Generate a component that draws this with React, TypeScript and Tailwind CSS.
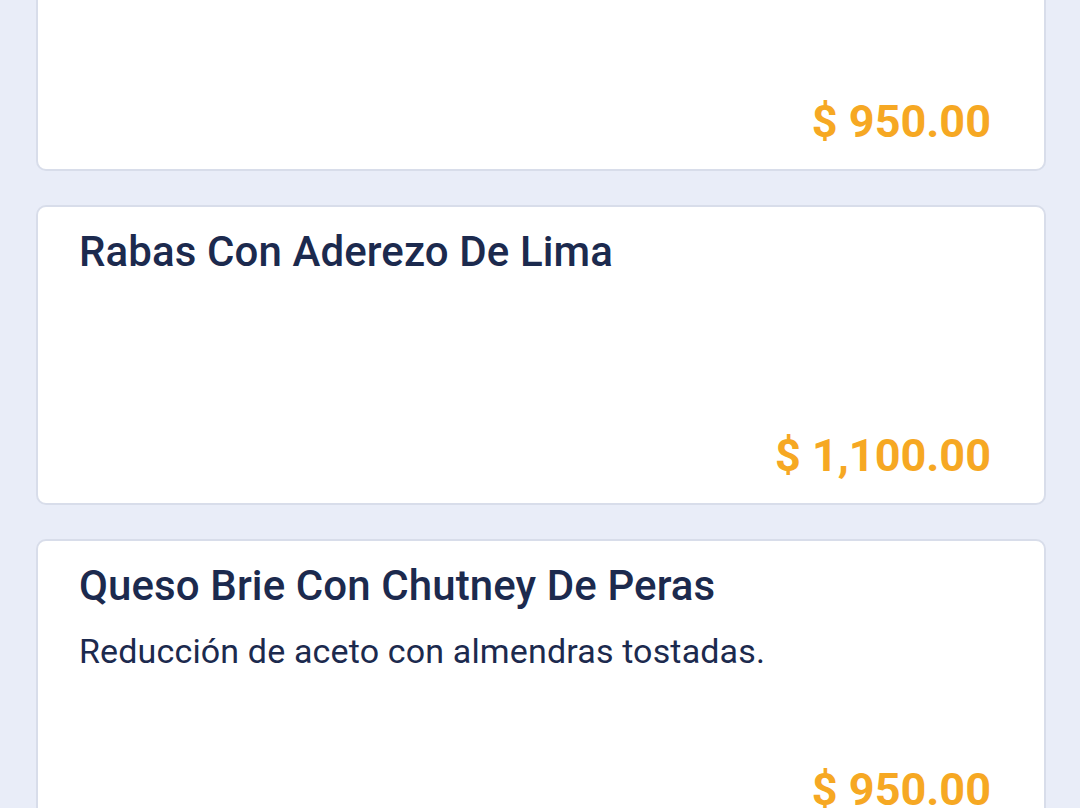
import React from "react";

type Item = { title?: string; desc?: string; price: string };

const items: Item[] = [
  { price: "$ 950.00" },
  { title: "Rabas Con Aderezo De Lima", price: "$ 1,100.00" },
  {
    title: "Queso Brie Con Chutney De Peras",
    desc: "Reducción de aceto con almendras tostadas.",
    price: "$ 950.00",
  },
];

function Card({ item }: { item: Item }) {
  return (
    <div className="h-[300px] shrink-0 rounded-[10px] border-2 border-[#d8ddea] bg-white flex flex-col pl-[41px] pr-[53px] pt-[21px] pb-[22px]">
      {item.title && (
        <h2 className="text-[42px] leading-[48px] font-medium text-[#1c2a4e] tracking-[0.1px] whitespace-nowrap">
          {item.title}
        </h2>
      )}
      {item.desc && (
        <p className="mt-[21px] text-[34px] leading-[40px] text-[#1c2a4e] tracking-[0.15px] whitespace-nowrap">
          {item.desc}
        </p>
      )}
      <div className="mt-auto text-right text-[45px] leading-[50px] font-bold text-[#f6a823] whitespace-nowrap">
        {item.price}
      </div>
    </div>
  );
}

export default function App() {
  return (
    <div
      className="w-[1080px] h-[808px] overflow-hidden bg-[#e9edf8]"
      style={{ fontFamily: "Roboto, 'Noto Sans', sans-serif" }}
    >
      <div className="flex flex-col gap-[34px] px-[36px] pr-[34px] -mt-[129px]">
        {items.map((it, i) => (
          <Card key={i} item={it} />
        ))}
      </div>
    </div>
  );
}
